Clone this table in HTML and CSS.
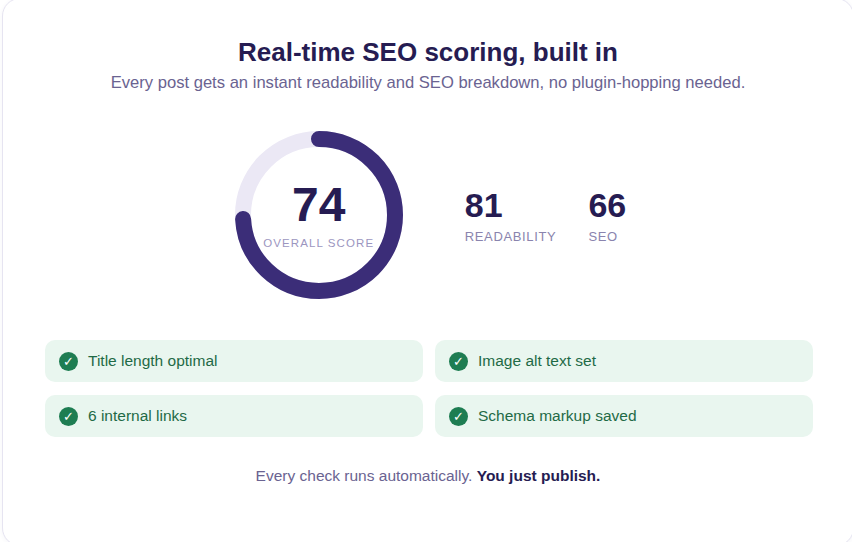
FILE: index.html
```html
<!DOCTYPE html>
<html lang="en">
<head>
<meta charset="utf-8">
<title>Real-time SEO scoring</title>
<link rel="stylesheet" href="styles.css">
</head>
<body>
<div class="card">
  <h1 class="title">Real-time SEO scoring, built in</h1>
  <p class="subtitle">Every post gets an instant readability and SEO breakdown, no plugin-hopping needed.</p>

  <div class="scores">
    <div class="ring">
      <svg class="ring-svg" width="170" height="170" viewBox="0 0 170 170">
        <circle cx="85" cy="85" r="76" fill="none" stroke="#ebe8f5" stroke-width="16"/>
        <circle cx="85" cy="85" r="76" fill="none" stroke="#3b2d78" stroke-width="16" stroke-linecap="round" stroke-dasharray="353.4 477.5" transform="rotate(-90 85 85)"/>
      </svg>
      <div class="ring-label">
        <div class="ring-num">74</div>
        <div class="ring-cap">OVERALL SCORE</div>
      </div>
    </div>
    <div class="stats">
      <div class="stat">
        <div class="stat-num">81</div>
        <div class="stat-cap">READABILITY</div>
      </div>
      <div class="stat">
        <div class="stat-num">66</div>
        <div class="stat-cap">SEO</div>
      </div>
    </div>
  </div>

  <div class="checks">
    <div class="check"><span class="tick">✓</span><span>Title length optimal</span></div>
    <div class="check"><span class="tick">✓</span><span>Image alt text set</span></div>
    <div class="check"><span class="tick">✓</span><span>6 internal links</span></div>
    <div class="check"><span class="tick">✓</span><span>Schema markup saved</span></div>
  </div>

  <p class="footer">Every check runs automatically. <strong>You just publish.</strong></p>
</div>
</body>
</html>
```

FILE: styles.css
```css
html, body {
  margin: 0;
  padding: 0;
  background: #ffffff;
  font-family: "Liberation Sans", Arial, sans-serif;
  overflow: hidden;
}

.card {
  box-sizing: border-box;
  width: 852px;
  height: 548px;
  margin: -2px 0 0 2px;
  border: 1px solid #e6e4f1;
  border-radius: 18px;
  background: #ffffff;
  box-shadow: 0 1px 4px rgba(60, 50, 120, 0.05);
  padding-top: 37px;
  display: flex;
  flex-direction: column;
  align-items: center;
}

.title {
  margin: 0;
  font-size: 26px;
  line-height: 32px;
  font-weight: 700;
  color: #261c52;
}

.subtitle {
  margin: 4px 0 0;
  font-size: 16.6px;
  line-height: 22px;
  color: #6a6391;
}

.scores {
  margin-top: 36px;
  display: flex;
  align-items: center;
  gap: 61px;
  padding-left: 4px;
}

.ring {
  position: relative;
  width: 170px;
  height: 170px;
}

.ring-svg {
  display: block;
}

.ring-label {
  position: absolute;
  inset: 0;
  display: flex;
  flex-direction: column;
  align-items: center;
  justify-content: center;
}

.ring-num {
  font-size: 48px;
  line-height: 50px;
  font-weight: 700;
  color: #261c52;
}

.ring-cap {
  margin-top: 6px;
  font-size: 11.5px;
  line-height: 14px;
  letter-spacing: 1.1px;
  color: #9c96bf;
}

.stats {
  display: flex;
  gap: 32px;
}

.stat-num {
  font-size: 34px;
  line-height: 38px;
  font-weight: 700;
  color: #261c52;
}

.stat-cap {
  margin-top: 5px;
  font-size: 13px;
  line-height: 16px;
  letter-spacing: 0.65px;
  color: #8a84ae;
}

.checks {
  margin: 40px 0 0 2px;
  width: 768px;
  display: grid;
  grid-template-columns: 1fr 1fr;
  column-gap: 12px;
  row-gap: 13px;
}

.check {
  height: 42px;
  box-sizing: border-box;
  padding: 0 14px;
  border-radius: 10px;
  background: #e9f6ef;
  display: flex;
  align-items: center;
  gap: 10px;
  font-size: 15.5px;
  color: #1f6a46;
}

.tick {
  width: 19px;
  height: 19px;
  border-radius: 50%;
  background: #1e7d52;
  color: #ffffff;
  font-family: "DejaVu Sans", sans-serif;
  font-size: 13px;
  line-height: 19px;
  text-align: center;
  flex: none;
}

.footer {
  margin: 29px 0 0;
  font-size: 15.5px;
  line-height: 20px;
  color: #6a6391;
}

.footer strong {
  color: #261c52;
  font-weight: 700;
}
```
